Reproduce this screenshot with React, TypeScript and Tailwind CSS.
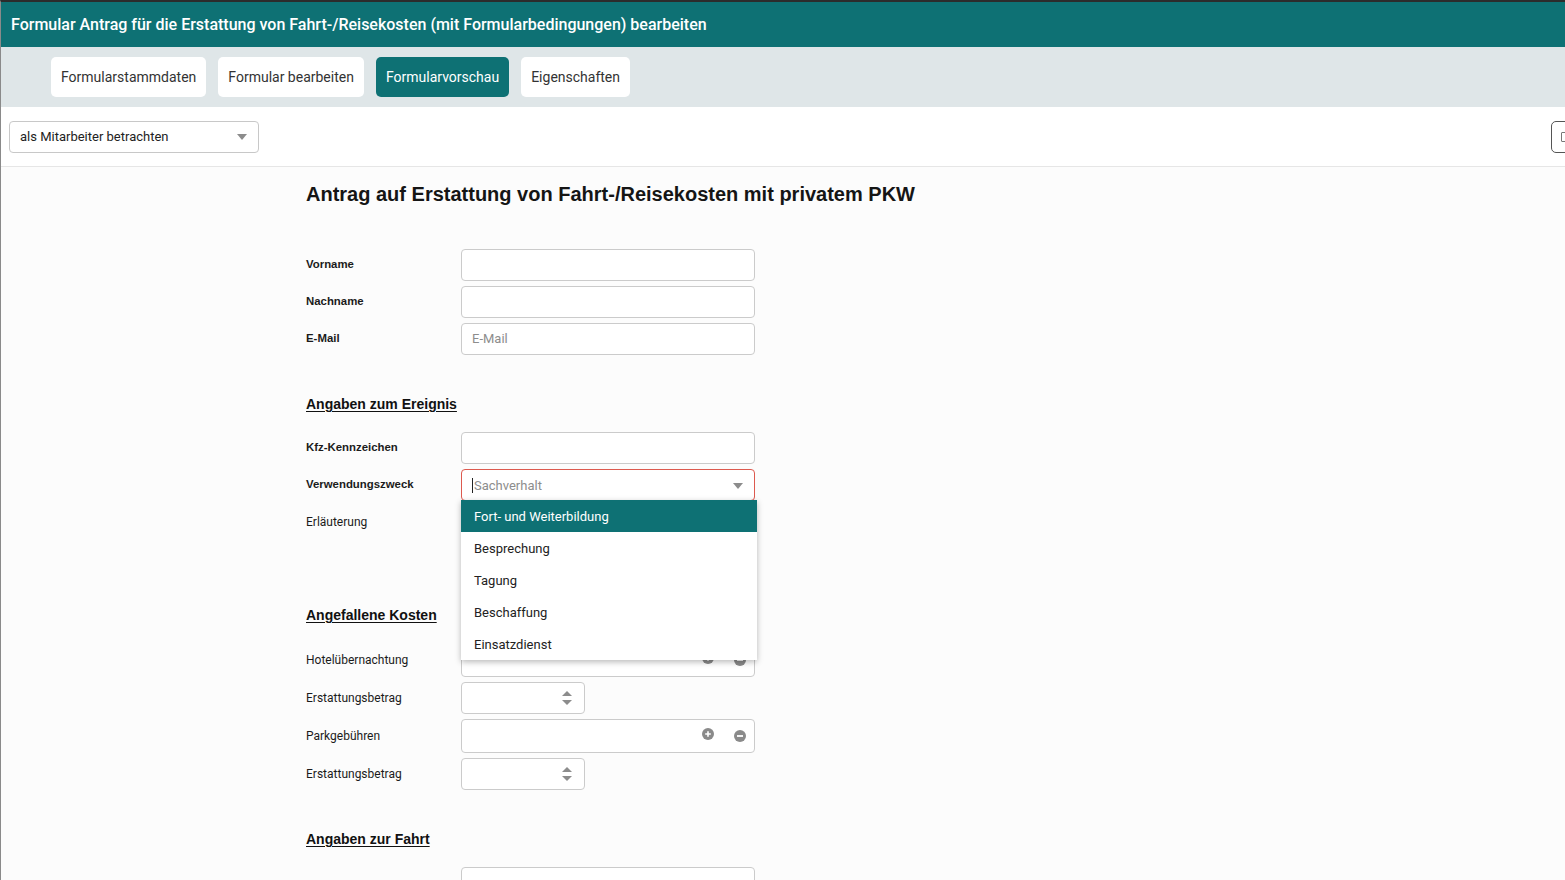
import React from "react";

const tabs = [
  { label: "Formularstammdaten", active: false },
  { label: "Formular bearbeiten", active: false },
  { label: "Formularvorschau", active: true },
  { label: "Eigenschaften", active: false },
];

const options = [
  "Fort- und Weiterbildung",
  "Besprechung",
  "Tagung",
  "Beschaffung",
  "Einsatzdienst",
];

function Caret() {
  return (
    <svg width="10" height="6" viewBox="0 0 10 6" className="shrink-0">
      <path d="M0 0 L10 0 L5 6 Z" fill="#8c8c8c" />
    </svg>
  );
}

function Label({ children, bold }: { children?: React.ReactNode; bold?: boolean }) {
  return (
    <div
      className={`w-[155px] h-[32px] flex items-center text-[#1b1b1b] ${
        bold
          ? "text-[11.4px] font-bold font-['Liberation_Sans',Arial,sans-serif]"
          : "text-[12px] font-['Roboto',sans-serif]"
      }`}
    >
      {children}
    </div>
  );
}

function TextInput({ placeholder }: { placeholder?: string }) {
  return (
    <div className="w-[294px] h-[32px] border border-[#cbcbcb] rounded-[4px] bg-white flex items-center px-[10px] text-[13px] text-[#8d8d8d] font-['Roboto',sans-serif]">
      {placeholder}
    </div>
  );
}

function Spinner() {
  return (
    <div className="w-[124px] h-[32px] border border-[#cbcbcb] rounded-[4px] bg-white flex items-center justify-end pr-[12px]">
      <svg width="10" height="16" viewBox="0 0 10 16">
        <path d="M0 6 L10 6 L5 1 Z" fill="#8c8c8c" />
        <path d="M0 10 L10 10 L5 15 Z" fill="#8c8c8c" />
      </svg>
    </div>
  );
}

function MoneyInput() {
  return (
    <div className="w-[294px] h-[34px] border border-[#cbcbcb] rounded-[4px] bg-white flex items-center justify-end pr-[8px] gap-[20px]">
      <svg width="12" height="12" viewBox="0 0 12 12" className="-mt-[4px]">
        <circle cx="6" cy="6" r="6" fill="#8a8a8a" />
        <path d="M6 3.2 V8.8 M3.2 6 H8.8" stroke="#fff" strokeWidth="1.6" />
      </svg>
      <svg width="12" height="12" viewBox="0 0 12 12">
        <circle cx="6" cy="6" r="6" fill="#8a8a8a" />
        <path d="M3 6 H9" stroke="#fff" strokeWidth="1.8" />
      </svg>
    </div>
  );
}

function Row({ children, className = "" }: { children: React.ReactNode; className?: string }) {
  return <div className={`flex ${className}`}>{children}</div>;
}

function SectionHeading({ children, className = "" }: { children: React.ReactNode; className?: string }) {
  return (
    <h2
      className={`h-[20px] leading-[20px] text-[14px] font-bold underline underline-offset-2 text-[#111] font-['Liberation_Sans',Arial,sans-serif] ${className}`}
    >
      {children}
    </h2>
  );
}

export default function App() {
  return (
    <div className="w-[1565px] h-[880px] overflow-hidden bg-[#fcfcfc] border-t-2 border-t-[#2c2c2c] border-l border-l-[#8a8a8a] font-['Roboto',sans-serif]">
      {/* Header */}
      <header className="h-[45px] bg-[#0e7174] flex items-center px-[10px]">
        <h1 className="text-white text-[16px] font-medium">
          Formular Antrag für die Erstattung von Fahrt-/Reisekosten (mit Formularbedingungen) bearbeiten
        </h1>
      </header>

      {/* Tabs */}
      <nav className="h-[60px] bg-[#dfe6e8] flex items-center pl-[50px] gap-[12px]">
        {tabs.map((tab) => (
          <button
            key={tab.label}
            className={`h-[40px] px-[10px] rounded-[5px] text-[14px] ${
              tab.active ? "bg-[#0e7174] text-white" : "bg-white text-[#333]"
            }`}
          >
            {tab.label}
          </button>
        ))}
      </nav>

      {/* Toolbar */}
      <div className="h-[60px] bg-white border-b border-[#e6e6e6] flex items-center justify-between pl-[8px]">
        <div className="w-[250px] h-[32px] border border-[#c8c8c8] rounded-[4px] flex items-center justify-between pl-[10px] pr-[11px] text-[13px] text-[#222]">
          <span>als Mitarbeiter betrachten</span>
          <Caret />
        </div>
        <div className="w-[36px] h-[32px] -mr-[22px] border border-[#555] rounded-[5px] bg-white flex items-center pl-[9px]">
          <div className="w-[8px] h-[10px] border border-[#777] rounded-[1px]" />
        </div>
      </div>

      {/* Form */}
      <main className="pl-[305px]">
        <h1 className="pt-[13px] h-[41px] leading-[28px] text-[20px] font-bold text-[#151515] font-['Liberation_Sans',Arial,sans-serif]">
          Antrag auf Erstattung von Fahrt-/Reisekosten mit privatem PKW
        </h1>

        <div className="mt-[41px] flex flex-col gap-[5px]">
          <Row>
            <Label bold>Vorname</Label>
            <TextInput />
          </Row>
          <Row>
            <Label bold>Nachname</Label>
            <TextInput />
          </Row>
          <Row>
            <Label bold>E-Mail</Label>
            <TextInput placeholder="E-Mail" />
          </Row>
        </div>

        <SectionHeading className="mt-[39px]">Angaben zum Ereignis</SectionHeading>

        <div className="mt-[18px] flex flex-col gap-[5px]">
          <Row>
            <Label bold>Kfz-Kennzeichen</Label>
            <TextInput />
          </Row>
          <Row>
            <Label bold>Verwendungszweck</Label>
            <div className="relative">
              <div className="w-[294px] h-[32px] border border-[#dd5a4f] rounded-[4px] bg-white flex items-center justify-between pl-[10px] pr-[11px] pt-px text-[13px] text-[#8d8d8d]">
                <span className="flex items-center">
                  <span className="w-px h-[15px] bg-[#222] mr-px" />
                  Sachverhalt
                </span>
                <Caret />
              </div>
              <ul className="absolute z-10 left-0 top-[31px] w-[296px] bg-white shadow-[0_2px_6px_rgba(0,0,0,0.28)] text-[13px] text-[#222]">
                {options.map((opt, i) => (
                  <li
                    key={opt}
                    className={`h-[32px] flex items-center px-[13px] pt-px ${
                      i === 0 ? "bg-[#0e7174] text-white" : ""
                    }`}
                  >
                    {opt}
                  </li>
                ))}
              </ul>
            </div>
          </Row>
          <Row>
            <Label>Erläuterung</Label>
            <div className="w-[294px] h-[60px] border border-[#cbcbcb] rounded-[4px] bg-white" />
          </Row>
        </div>

        <SectionHeading className="mt-[39px]">Angefallene Kosten</SectionHeading>

        <div className="mt-[18px] flex flex-col gap-[5px]">
          <Row className="items-center">
            <Label>Hotelübernachtung</Label>
            <MoneyInput />
          </Row>
          <Row>
            <Label>Erstattungsbetrag</Label>
            <Spinner />
          </Row>
          <Row className="items-center">
            <Label>Parkgebühren</Label>
            <MoneyInput />
          </Row>
          <Row>
            <Label>Erstattungsbetrag</Label>
            <Spinner />
          </Row>
        </div>

        <SectionHeading className="mt-[39px]">Angaben zur Fahrt</SectionHeading>

        <div className="mt-[18px] flex flex-col gap-[5px]">
          <Row>
            <Label />
            <TextInput />
          </Row>
        </div>
      </main>
    </div>
  );
}
